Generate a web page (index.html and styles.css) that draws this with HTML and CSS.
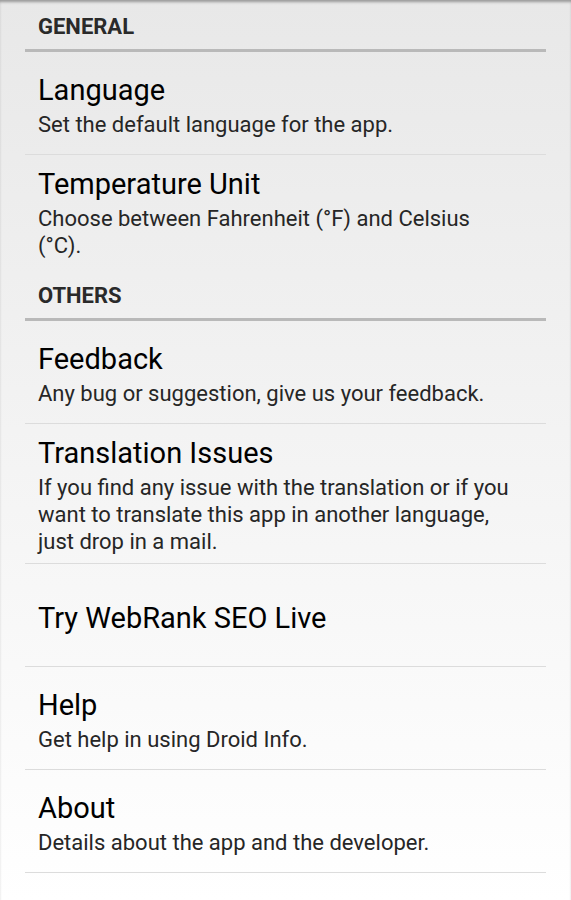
FILE: index.html
```html
<!DOCTYPE html>
<html lang="en">
<head>
<meta charset="utf-8">
<title>Settings</title>
<link rel="stylesheet" href="styles.css">
</head>
<body>
<div class="screen">
  <div class="list">
    <div class="section">GENERAL</div>
    <div class="item">
      <div class="title">Language</div>
      <div class="summary">Set the default language for the app.</div>
    </div>
    <div class="item last">
      <div class="title">Temperature Unit</div>
      <div class="summary">Choose between Fahrenheit (°F) and Celsius (°C).</div>
    </div>
    <div class="section">OTHERS</div>
    <div class="item">
      <div class="title">Feedback</div>
      <div class="summary">Any bug or suggestion, give us your feedback.</div>
    </div>
    <div class="item">
      <div class="title">Translation Issues</div>
      <div class="summary">If you find any issue with the translation or if you want to translate this app in another language, just drop in a mail.</div>
    </div>
    <div class="item">
      <div class="title">Try WebRank SEO Live</div>
    </div>
    <div class="item">
      <div class="title">Help</div>
      <div class="summary">Get help in using Droid Info.</div>
    </div>
    <div class="item">
      <div class="title">About</div>
      <div class="summary">Details about the app and the developer.</div>
    </div>
  </div>
</div>
</body>
</html>
```

FILE: styles.css
```css
html, body {
  margin: 0;
  padding: 0;
  height: 100%;
}
body {
  font-family: Roboto, "Noto Sans", "Liberation Sans", sans-serif;
  background: linear-gradient(#e8e8e8, #ffffff);
  color: #000;
}
.screen {
  min-height: 900px;
  box-shadow: inset 0 3px 3px -1px rgba(0, 0, 0, 0.35);
}
.list {
  margin: 0 25px;
}
.section {
  font-size: 22px;
  font-weight: bold;
  color: #2a2a2a;
  line-height: 26px;
  padding: 14px 0 9px 13px;
  border-bottom: 3px solid #b9b9b9;
}
.item {
  min-height: 103px;
  box-sizing: border-box;
  padding: 13px 34px 8px 13px;
  display: flex;
  flex-direction: column;
  justify-content: center;
  border-bottom: 1px solid #dcdcdc;
}
.item.last {
  border-bottom: none;
  padding-bottom: 10px;
}
.title {
  font-size: 29px;
  line-height: 32px;
  color: #000;
}
.summary {
  font-size: 22px;
  line-height: 27px;
  color: #262626;
  margin-top: 5px;
}
```
